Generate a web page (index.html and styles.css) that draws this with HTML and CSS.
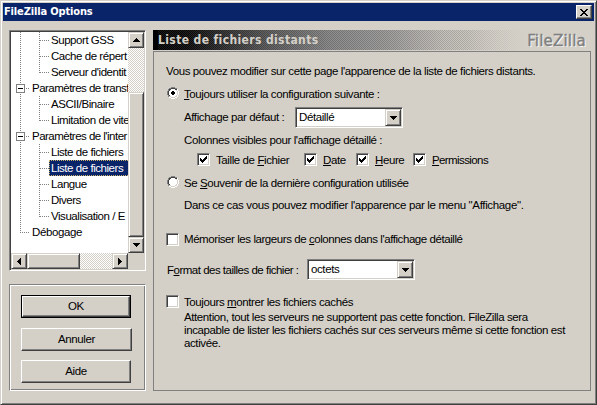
FILE: index.html
```html
<!DOCTYPE html>
<html lang="fr">
<head>
<meta charset="utf-8">
<title>FileZilla Options</title>
<link rel="stylesheet" href="styles.css">
</head>
<body>
<svg width="0" height="0" class="defs">
  <symbol id="check" viewBox="0 0 7 7"><path d="M0 2h1v1h1v1h1v-1h1v-1h1v-1h1v-1h1v3h-1v1h-1v1h-1v1h-1v1h-1v-1h-1v-1h-1z"/></symbol>
  <symbol id="down" viewBox="0 0 7 4"><path d="M0 0h7v1h-1v1h-1v1h-1v1h-1v-1h-1v-1h-1v-1h-1z"/></symbol>
  <symbol id="up" viewBox="0 0 7 4"><path d="M3 0h1v1h1v1h1v1h1v1h-7v-1h1v-1h1v-1h1z"/></symbol>
  <symbol id="left" viewBox="0 0 4 7"><path d="M0 3h1v-1h1v-1h1v-1h1v7h-1v-1h-1v-1h-1v-1h-1z"/></symbol>
  <symbol id="right" viewBox="0 0 4 7"><path d="M0 0h1v1h1v1h1v1h1v1h-1v1h-1v1h-1v1h-1z"/></symbol>
  <symbol id="close" viewBox="0 0 8 7"><path d="M0 0h2v1h1v1h2v-1h1v-1h2v1h-1v1h-1v1h-1v1h1v1h1v1h1v1h-2v-1h-1v-1h-2v1h-1v1h-2v-1h1v-1h1v-1h1v-1h-1v-1h-1v-1h-1z"/></symbol>
  <symbol id="radio" viewBox="0 0 12 12">
    <path fill="#fff" d="M4 1h4v1h2v2h1v4h-1v2h-2v1h-4v-1h-2v-2h-1v-4h1v-2h2z"/>
    <path fill="#808080" d="M4 0h4v1h-4zM2 1h2v1h-2zM8 1h2v1h-2zM1 2h1v2h-1zM0 4h1v4h-1zM1 8h1v2h-1z"/>
    <path fill="#404040" d="M4 1h4v1h-4zM2 2h2v1h-1v1h-1zM8 2h2v1h-2zM1 4h1v4h-1zM2 8h1v1h-1z"/>
    <path fill="#fff" d="M11 4h1v4h-1zM10 8h1v2h-1zM8 10h2v1h-2zM4 11h4v1h-4zM2 10h2v1h-2zM10 2h1v2h-1z"/>
    <path fill="#d4d0c8" d="M10 4h1v4h-1zM8 9h2v1h-2zM4 10h4v1h-4zM2 9h2v1h-2zM9 8h1v1h-1zM9 3h1v1h-1z"/>
  </symbol>
</svg>
<div class="window">
  <div class="titlebar">
    <span class="title">FileZilla Options</span>
    <span class="close raised"><svg width="8" height="7"><use href="#close"/></svg></span>
  </div>
  <div class="content">
    <div class="sidebar">
      <div class="tree-box">
        <div class="tree">
          <div class="item child"><span>Support GSS</span></div>
          <div class="item child"><span>Cache de répert</span></div>
          <div class="item child last"><span>Serveur d'identit</span></div>
          <div class="item parent"><i></i><span>Paramètres de transf</span></div>
          <div class="item child"><span>ASCII/Binaire</span></div>
          <div class="item child last"><span>Limitation de vite</span></div>
          <div class="item parent"><i></i><span>Paramètres de l'inter</span></div>
          <div class="item child"><span>Liste de fichiers</span></div>
          <div class="item child selected"><span>Liste de fichiers</span></div>
          <div class="item child"><span>Langue</span></div>
          <div class="item child"><span>Divers</span></div>
          <div class="item child last"><span>Visualisation / E</span></div>
          <div class="item leaf"><span>Débogage</span></div>
        </div>
        <div class="vscroll track">
          <span class="raised arrow"><svg width="7" height="4"><use href="#up"/></svg></span>
          <span class="raised vthumb"></span>
          <span class="raised arrow"><svg width="7" height="4"><use href="#down"/></svg></span>
        </div>
        <div class="hscroll track">
          <span class="raised arrow"><svg width="4" height="7"><use href="#left"/></svg></span>
          <span class="raised hthumb"></span>
          <span class="raised arrow end"><svg width="4" height="7"><use href="#right"/></svg></span>
        </div>
      </div>
      <div class="buttons">
        <div class="default"><div class="button raised ok">OK</div></div>
        <div class="button raised cancel">Annuler</div>
        <div class="button raised help">Aide</div>
      </div>
    </div>
    <div class="main">
      <div class="header"><span class="heading">Liste de fichiers distants</span><span class="brand">FileZilla</span></div>
      <div class="panel">
        <div class="row intro">Vous pouvez modifier sur cette page l'apparence de la liste de fichiers distants.</div>
        <div class="row option"><span class="radio"><svg width="12" height="12"><use href="#radio"/><path d="M5 4h2v1h1v2h-1v1h-2v-1h-1v-2h1z"/></svg></span><span><u>T</u>oujours utiliser la configuration suivante :</span></div>
        <div class="row indent gap7"><span class="display-label">Affichage par défaut :</span><div class="select">Détaillé<span class="raised drop"><svg width="7" height="4"><use href="#down"/></svg></span></div></div>
        <div class="row indent gap7">Colonnes visibles pour l'affichage détaillé :</div>
        <div class="row columns">
          <span class="check"><svg width="7" height="7"><use href="#check"/></svg></span><span class="c-size">Taille de <u>F</u>ichier</span>
          <span class="check"><svg width="7" height="7"><use href="#check"/></svg></span><span class="c-date"><u>D</u>ate</span>
          <span class="check"><svg width="7" height="7"><use href="#check"/></svg></span><span class="c-time"><u>H</u>eure</span>
          <span class="check"><svg width="7" height="7"><use href="#check"/></svg></span><span class="c-perm"><u>P</u>ermissions</span>
        </div>
        <div class="row option"><span class="radio"><svg width="12" height="12"><use href="#radio"/></svg></span><span>Se <u>S</u>ouvenir de la dernière configuration utilisée</span></div>
        <div class="row indent remark">Dans ce cas vous pouvez modifier l'apparence par le menu "Affichage".</div>
        <div class="row memorize"><span class="check"></span><span>Mémoriser les largeurs de <u>c</u>olonnes dans l'affichage détaillé</span></div>
        <div class="row format"><span class="format-label">F<u>o</u>rmat des tailles de fichier :</span><div class="select">octets<span class="raised drop"><svg width="7" height="4"><use href="#down"/></svg></span></div></div>
        <div class="row hidden-files"><span class="check"></span><span>Toujours <u>m</u>ontrer les fichiers cachés</span></div>
        <p class="note">Attention, tout les serveurs ne supportent pas cette fonction. FileZilla sera<br>incapable de lister les fichiers cachés sur ces serveurs même si cette fonction est<br>activée.</p>
      </div>
    </div>
  </div>
</div>
</body>
</html>
```
FILE: styles.css
```css
* { box-sizing: border-box; }
body {
  margin: 0;
  background: #d4d0c8;
  color: #000;
  font: 11.5px/16px "Liberation Sans", Arial, sans-serif;
  letter-spacing: -0.4px;
  white-space: nowrap;
  overflow: hidden;
}
svg { display: block; flex: none; }
.defs { position: absolute; }
u { text-underline-offset: 1px; text-decoration-thickness: 1px; text-decoration-skip-ink: none; }

.window {
  width: 597px;
  height: 405px;
  padding: 2px 1px 1px 2px;
  border: 1px solid;
  border-color: #d4d0c8 #404040 #404040 #d4d0c8;
  box-shadow: inset 1px 1px #fff, inset -1px -1px #808080;
}
.titlebar {
  display: flex;
  justify-content: space-between;
  width: 591px;
  height: 18px;
  padding: 2px 2px 0 1px;
  background: #0a246a;
}
.title {
  color: #fff;
  font: bold 11px/14px "DejaVu Sans Condensed", "DejaVu Sans", sans-serif;
  font-stretch: condensed;
  letter-spacing: -0.15px;
}
.raised {
  display: flex;
  align-items: center;
  justify-content: center;
  background: #d4d0c8;
  border: 1px solid;
  border-color: #d4d0c8 #404040 #404040 #d4d0c8;
  box-shadow: inset 1px 1px #fff, inset -1px -1px #808080;
}
.close { width: 16px; height: 14px; border-color: #fff #404040 #404040 #fff; box-shadow: inset -1px -1px #808080; }

.content { display: flex; gap: 7px; padding: 9px 0 0 6px; }
.sidebar { width: 137px; }

/* Category tree */
.tree-box {
  display: grid;
  grid-template-columns: 117px 16px;
  grid-template-rows: 221px 16px;
  width: 137px;
  height: 241px;
  padding: 1px;
  border: 1px solid;
  border-color: #808080 #fff #fff #808080;
  box-shadow: inset 1px 1px #404040, inset -1px -1px #d4d0c8;
  background: #d4d0c8;
}
.tree { background: #fff; overflow: hidden; }
.item {
  display: flex;
  position: relative;
  height: 16px;
  background: repeating-linear-gradient(#808080 0 1px, transparent 1px 2px) 9px 0 / 1px 16px no-repeat;
}
.item::before {
  content: "";
  position: absolute;
  left: 29px;
  top: 8px;
  width: 9px;
  height: 1px;
  background: repeating-linear-gradient(90deg, #808080 0 1px, transparent 1px 2px);
}
.child::after {
  content: "";
  position: absolute;
  left: 28px;
  top: 0;
  width: 1px;
  height: 16px;
  background: repeating-linear-gradient(#808080 0 1px, transparent 1px 2px);
}
.child.last::after { height: 9px; }
.child { padding-left: 38px; letter-spacing: -0.45px; }
.child span { padding-left: 2px; flex: 1; }
.parent, .leaf { padding-left: 21px; }
.parent { letter-spacing: -0.52px; }
.parent::before { left: 15px; width: 4px; }
.leaf { background-size: 1px 9px; }
.leaf::before { left: 9px; width: 9px; }
.parent i {
  position: absolute;
  left: 5px;
  top: 4px;
  width: 9px;
  height: 9px;
  border: 1px solid #808080;
  background: linear-gradient(#000, #000) 1px 3px / 5px 1px no-repeat #fff;
}
.selected span { background: #0a246a; color: #fff; outline: 1px dotted #c8b068; outline-offset: -1px; margin-right: -2px; }

.track { background: repeating-conic-gradient(#fff 0 25%, #d4d0c8 0 50%) 0 0 / 2px 2px; }
.vscroll { display: flex; flex-direction: column; justify-content: space-between; }
.arrow { width: 16px; height: 16px; }
.vthumb { height: 145px; margin-top: 44px; }
.hscroll { display: flex; }
.hthumb { width: 53px; }
.end { margin-left: auto; }

.buttons {
  height: 107px;
  margin-top: 13px;
  padding: 10px 0 0 11px;
  border: 1px solid;
  border-color: #808080 #fff #fff #808080;
  box-shadow: inset 1px 1px #fff, inset -1px -1px #808080;
}
.button { height: 23px; width: 111px; padding-bottom: 2px; border-color: #fff #404040 #404040 #fff; box-shadow: inset -1px -1px #808080; }
.default { border: 1px solid #000; width: 110px; height: 23px; }
.ok { width: 108px; height: 21px; }
.cancel { margin-top: 10px; }
.help { width: 110px; margin-top: 9px; }

/* Options page */
.main { width: 438px; }
.header {
  display: flex;
  justify-content: space-between;
  height: 20px;
  padding: 0 5px 0 5px;
  background:
    repeating-conic-gradient(rgba(0, 0, 0, .12) 0 25%, rgba(255, 255, 255, .1) 0 50%) 40px 0 / 2px 2px,
    linear-gradient(90deg, #000 0, #080808 35px, #505050 110px, #808080 175px, #969594 235px, #bdb9b3 290px, #c6c2bb 320px, #d4d0c8 370px);
  background-size: 2px 2px, auto;
  background-clip: content-box, border-box;
  padding-right: 5px;
}
.heading {
  color: #d4d0c8;
  font: bold 12px/20px "DejaVu Sans Condensed", "DejaVu Sans", sans-serif;
  font-stretch: condensed;
  letter-spacing: 0.38px;
}
.brand {
  color: #808080;
  font: 15px/22px "DejaVu Sans", sans-serif;
  letter-spacing: 0.2px;
  -webkit-text-stroke: 0.4px #808080;
  text-shadow: 1px 1px #fff;
  margin-right: -5px;
  padding: 0 5px 0 60px;
  background: linear-gradient(90deg, transparent, #d4d0c8 60px);
}
.panel {
  height: 340px;
  margin-top: 1px;
  padding: 11px 0 0 12px;
  border: 1px solid #808080;
}
.row { display: flex; height: 16px; }
.option { margin-top: 7px; }
.radio { width: 18px; padding: 1px 0 0 1px; }
.indent { padding-left: 18px; }
.gap7 { margin-top: 7px; }
.display-label { width: 111px; }
.select {
  display: flex;
  justify-content: space-between;
  width: 108px;
  height: 21px;
  margin-top: -2px;
  padding: 1px 1px 1px 3px;
  border: 1px solid;
  border-color: #808080 #fff #fff #808080;
  box-shadow: inset 1px 1px #404040, inset -1px -1px #d4d0c8;
  background: #fff;
}
.drop { width: 16px; height: 17px; }
.check {
  display: flex;
  align-items: center;
  justify-content: center;
  flex: none;
  width: 13px;
  height: 13px;
  margin: 1px 5px 0 0;
  border: 1px solid;
  border-color: #808080 #fff #fff #808080;
  box-shadow: inset 1px 1px #404040, inset -1px -1px #d4d0c8;
  background: #fff;
}
.columns { margin-top: 4px; padding-left: 31px; }
.columns .check { margin-right: 6px; }
.c-size { width: 88px; }
.c-date { width: 33px; }
.c-time { width: 38px; }
.c-perm { letter-spacing: -0.6px; }
.remark { margin-top: 6px; letter-spacing: -0.35px; }
.memorize { margin-top: 18px; letter-spacing: -0.43px; }
.memorize .check { margin-top: 2px; }
.format { margin-top: 15px; padding-left: 1px; }
.format-label { width: 140px; letter-spacing: -0.5px; }
.format .select { margin-top: -3px; }
.hidden-files { margin-top: 16px; }
.note { margin: 1px 0 0 18px; line-height: 13px; }
```
